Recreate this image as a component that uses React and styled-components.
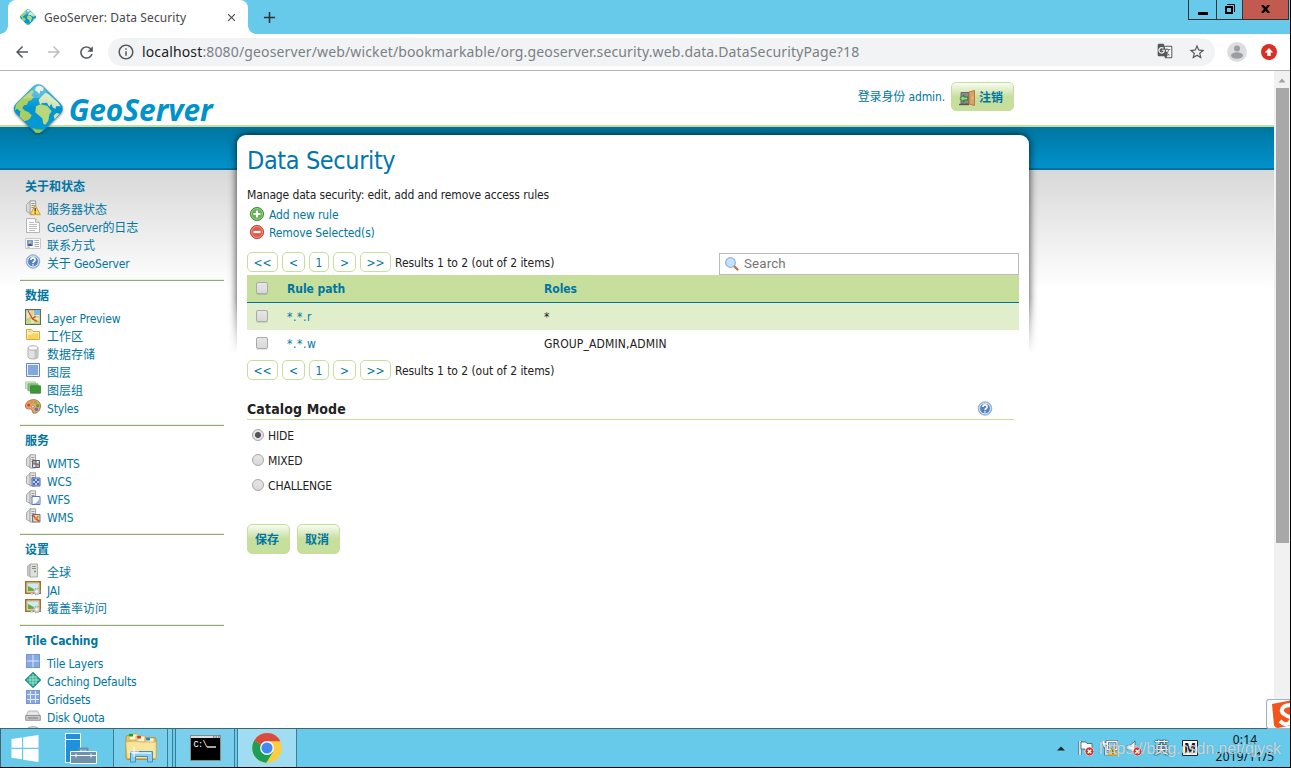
import React from 'react';
import styled, { createGlobalStyle, css } from 'styled-components';
import { MdArrowBack, MdArrowForward, MdRefresh, MdInfoOutline, MdStarBorder, MdClose, MdAdd, MdGTranslate } from 'react-icons/md';

const GlobalStyle = createGlobalStyle`
    * { box-sizing: border-box; }
    body {
        margin: 0;
        overflow: hidden;
        color: #222;
        font: 12px/18px "DejaVu Sans Condensed", "Noto Sans CJK SC", sans-serif;
        letter-spacing: -0.13px;
    }
    svg { display: block; flex: none; }
`

/* ---------- browser window ---------- */

const Desktop = styled.div`
    display: flex;
    flex-direction: column;
    width: 1291px;
    height: 768px;
    overflow: hidden;
    background: #fff;
    border-right: 1px solid #000;
    border-bottom: 1px solid #000;
    position: relative;
`
const TabStrip = styled.div`
    display: flex;
    height: 34px;
    flex: none;
    padding-left: 8px;
    background: #67caeb;
`
const Tab = styled.div`
    position: relative;
    display: flex;
    align-items: center;
    width: 240px;
    padding: 0 10px 0 12px;
    background: #fff;
    border-radius: 8px 8px 0 0;
    color: #45494d;
    font: 12px/34px "Noto Sans", sans-serif;
    letter-spacing: 0.09px;
    &::before, &::after {
        content: '';
        position: absolute;
        bottom: 0;
        width: 8px;
        height: 8px;
    }
    &::before {
        left: -8px;
        background: radial-gradient(circle at 0 0, #67caeb 7.5px, #fff 8px);
    }
    &::after {
        right: -8px;
        background: radial-gradient(circle at 100% 0, #67caeb 7.5px, #fff 8px);
    }
`
const TabTitle = styled.span`
    flex: 1;
    padding: 1px 0 0 8px;
`
const NewTab = styled.div`
    display: flex;
    align-items: center;
    padding-left: 12px;
    color: #333;
`
const WindowButtons = styled.div`
    display: flex;
    margin-left: auto;
    margin-right: 1px;
    height: 20px;
    border: 1px solid #333;
    border-top: none;
`
const WindowButton = styled.div`
    display: flex;
    justify-content: center;
    align-items: center;
    width: ${(p) => p.width}px;
    padding-bottom: 2px;
    background: ${(p) => (p.close ? '#c35a50' : 'transparent')};
    & + & { border-left: 1px solid #333; }
`
const Toolbar = styled.div`
    display: flex;
    align-items: center;
    height: 37px;
    flex: none;
    padding: 0 13px;
    border-bottom: 1px solid #b5b3b5;
    color: #55595d;
`
const NavIcons = styled.div`
    display: flex;
    gap: 14px;
    width: 95px;
    & > :nth-child(2) { color: #bcbec0; }
`
const Omnibox = styled.div`
    display: flex;
    align-items: center;
    width: 1107px;
    height: 28px;
    padding: 0 9px;
    border-radius: 14px;
    background: #f1f3f4;
`
const Url = styled.span`
    flex: 1;
    padding-left: 7px;
    color: #7b8085;
    font: 14px/28px "Noto Sans", sans-serif;
    letter-spacing: 0.14px;
    b { font-weight: 400; color: #202124; }
`
const OmniIcons = styled.div`
    display: flex;
    gap: 15px;
`
const Avatar = styled.svg`
    margin-left: 12px;
`
const Update = styled.svg`
    margin-left: 14px;
`
const Viewport = styled.div`
    display: flex;
    flex: 1;
    min-height: 0;
`
const Scrollbar = styled.div`
    display: flex;
    flex-direction: column;
    align-items: center;
    width: 16px;
    background: #f1f1f1;
`
const ScrollThumb = styled.div`
    width: 13px;
    height: 455px;
    background: #a8a8a8;
`

/* ---------- GeoServer page ---------- */

const Web = styled.div`
    width: 1274px;
    overflow: hidden;
    background: linear-gradient(
        #fff 54px, #c6df9c 54px, #c6df9c 56px, #0076a1 56px, #0092cb 97px,
        #00709a 97px, #00709a 99px, #d8d8d8 99px, #fff 218px
    );
    color: #222;
`
const Header = styled.div`
    display: flex;
    align-items: flex-start;
    height: 64px;
    padding: 5px 260px 0 5px;
`
const Login = styled.div`
    display: flex;
    align-items: center;
    gap: 6px;
    margin: 6px 0 0 auto;
    color: #0076a1;
`
const GreenButton = styled.button`
    display: flex;
    align-items: center;
    gap: 4px;
    width: ${(p) => p.width}px;
    height: ${(p) => p.height}px;
    padding: 2px 0 0 7px;
    border: 1px solid #c6df9c;
    border-radius: 5px;
    background: linear-gradient(#f8fbf2, #c6df9c 14px);
    color: #0076a1;
    font: bold 12px/18px "DejaVu Sans Condensed", "Noto Sans CJK SC", sans-serif;
    letter-spacing: 0;
`
const Body = styled.div`
    display: flex;
    gap: 13px;
`
const Sidebar = styled.div`
    width: 204px;
    margin: 37px 0 0 20px;
`
const NavBlock = styled.div`
    padding: 0 0 8px 5px;
    border-bottom: 1px solid #96a482;
    box-shadow: inset 0 -1px #e9f3d9;
`
const NavHeading = styled.div`
    height: 28px;
    color: #0076a1;
    font-weight: bold;
    line-height: 31px;
    letter-spacing: ${(p) => (p.cjk ? 0 : '-0.1px')};
`
const NavItem = styled.div`
    display: flex;
    height: 18px;
    gap: 6px;
    color: #0076a1;
    line-height: 21px;
    letter-spacing: ${(p) => (p.cjk ? 0 : '-0.17px')};
`
const Card = styled.div`
    position: relative;
    width: 792px;
    height: 600px;
    padding: 0 10px;
    border-radius: 9px 9px 0 0;
    background: #fff;
`
const ShadowFade = styled.div`
    position: absolute;
    z-index: -1;
    left: -12px;
    right: -12px;
    top: -12px;
    height: 232px;
    padding: 12px;
    overflow: hidden;
    mask-image: linear-gradient(#000 175px, transparent 231px);
    &::before {
        content: '';
        display: block;
        height: 300px;
        border-radius: 9px;
        box-shadow: 0 0 9px rgba(0, 0, 0, 0.8);
    }
`
const CardWrap = styled.div`
    position: relative;
    z-index: 0;
`
const Title = styled.h1`
    margin: 0;
    height: 50px;
    color: #0076b0;
    font-size: 25px;
    font-weight: 400;
    line-height: 52px;
    letter-spacing: -0.38px;
`
const Description = styled.p`
    margin: 0;
    line-height: 20px;
`
const Action = styled.div`
    display: flex;
    gap: 4px;
    height: 18px;
    padding-left: 2px;
    color: #0076a1;
    line-height: 20px;
    svg { margin-top: 1px; }
`
const TableTop = styled.div`
    display: flex;
    justify-content: space-between;
    height: 23px;
    margin-top: 11px;
`
const PagerRow = styled.div`
    display: flex;
    gap: 4px;
    height: 20px;
    line-height: 22px;
    letter-spacing: -0.05px;
`
const PageLink = styled.a`
    width: ${(p) => p.width}px;
    height: 20px;
    border: 1px solid #c6df9c;
    border-radius: 5px;
    color: #0076a1;
    line-height: 20px;
    text-align: center;
    letter-spacing: 0;
`
const Search = styled.div`
    display: flex;
    align-items: center;
    gap: 4px;
    align-self: flex-end;
    width: 300px;
    height: 22px;
    padding-left: 4px;
    border: 1px solid #bbb;
    color: #757575;
    font: 13.33px/20px Roboto, sans-serif;
    letter-spacing: 0.15px;
`
const Row = styled.div`
    display: grid;
    grid-template-columns: 40px 257px 1fr;
    align-items: center;
    height: ${(p) => (p.head ? 28 : 27)}px;
    padding-top: 2px;
    line-height: 25px;
    background: ${(p) => (p.even ? '#e0eecb' : 'transparent')};
    ${(p) => p.head && css`
        background: #c6df9c;
        border-bottom: 1px solid #00749f;
        color: #0076a1;
        font-weight: bold;
        letter-spacing: -0.05px;
    `}
`
const RuleLink = styled.span`
    color: #0076a1;
    letter-spacing: 0.6px;
`
const Roles = styled.span`
    letter-spacing: 0.15px;
`
const Checkbox = styled.span`
    width: 12px;
    height: 12px;
    margin: 0 0 3px 9px;
    border: 1px solid #a9a9a9;
    border-radius: 2px;
    background: linear-gradient(#e6e6e6, #d8d8d8);
    box-shadow: 0 1px rgba(0, 0, 0, 0.1);
`
const BottomPager = styled.div`
    margin-top: 3px;
`
const ModeHeading = styled.h2`
    display: flex;
    justify-content: space-between;
    align-items: center;
    width: 767px;
    height: 21px;
    margin: 19px 0 3px;
    padding: 0 21px 0 0;
    border-bottom: 1px solid #c6df9c;
    font-size: 14px;
    line-height: 20px;
    letter-spacing: 0.13px;
    svg { margin-bottom: 1px; }
`
const RadioRow = styled.label`
    display: flex;
    align-items: center;
    gap: 4px;
    height: 25px;
    padding-left: 5px;
`
const Radio = styled.span`
    width: 12px;
    height: 12px;
    margin-bottom: 2px;
    border: 1px solid #a6a6a6;
    border-radius: 50%;
    background: ${(p) => (p.checked
        ? 'radial-gradient(circle, #555 2.6px, #e3e3e3 3.4px)'
        : 'linear-gradient(#e6e6e6, #d9d9d9)')};
`
const Buttons = styled.div`
    display: flex;
    gap: 7px;
    margin-top: 26px;
`

/* ---------- taskbar ---------- */

const Taskbar = styled.div`
    display: flex;
    height: 39px;
    flex: none;
    border-top: 1px solid #47626d;
    border-left: 1px solid #47626d;
    background: #67caeb;
`
const TaskItem = styled.div`
    display: flex;
    justify-content: center;
    align-items: center;
    width: ${(p) => p.width}px;
    border: solid #3a7f98;
    border-width: ${(p) => (p.open ? '0 1px' : '0')};
    background: ${(p) => (p.active ? '#a1ddf2' : p.open ? '#79cfec' : 'transparent')};
`
const StackEdge = styled.div`
    width: 5px;
    margin-right: 2px;
    border-right: 1px solid #3a7f98;
    background: #79cfec;
`
const Tray = styled.div`
    display: flex;
    align-items: center;
    gap: 8px;
    margin-left: auto;
    color: #fff;
`
const Caret = styled.svg`
    margin-right: 5px;
`
const Clock = styled.div`
    width: 82px;
    margin-left: 2px;
    padding-right: 8px;
    color: #111;
    font: 12px/17px "Noto Sans", sans-serif;
    letter-spacing: 0.2px;
    text-align: center;
`
const Ime = styled.span`
    margin: 0 5px 0 4px;
    font-size: 15px;
    text-shadow: 0 0 1px #123, 0 0 2px #123, 0 0 1px #123;
    letter-spacing: 0;
`
const Watermark = styled.div`
    position: absolute;
    right: 9px;
    bottom: 7px;
    color: rgba(255, 255, 255, 0.65);
    text-shadow: 0 0 1px rgba(90, 110, 120, 0.7);
    font: 16px/22px "Liberation Sans", sans-serif;
    letter-spacing: -0.08px;
`
const Sogou = styled.div`
    position: absolute;
    right: -1px;
    top: 699px;
    width: 25px;
    height: 30px;
    overflow: hidden;
    border: 1px solid #9fb4c4;
    border-right: none;
    border-radius: 3px 0 0 3px;
    background: #fbfcfd;
`

/* ---------- icons ---------- */

const Globe = () => (
    <g>
        <rect x="-58" y="-58" width="116" height="116" rx="21" transform="translate(100 98) rotate(45)" fill="url(#sea)" />
        <path d="M62 57 L82 42 L86 48 L79 58 L86 63 L80 72 L70 76 L66 86 L57 88 L52 96 L60 104 L70 108 L80 118 L76 127 L68 133 L58 136 L44 122 L46 106 L36 98 L29 104 L33 86 L46 72Z" fill="#a9cf62" />
        <path d="M93 34 Q104 24 116 36 L114 45 L106 44 L103 55 L97 47 L90 43Z" fill="#e9f3d6" />
        <path d="M101 71 L111 60 L122 50 L133 56 L160 80 L166 90 L153 91 L151 99 L143 94 L139 83 L133 92 L126 80 L111 81 L105 86Z" fill="#d3e6b3" />
        <path d="M93 91 L107 85 L127 90 L140 106 L133 116 L130 134 L121 146 L115 143 L112 127 L100 117 L91 109Z" fill="#b9d87c" />
        <path d="M146 119 L154 111 L164 113 L149 130Z" fill="#cfe3a2" />
        <path d="M82 156 L95 160 L115 161 L103 171 L91 170Z" fill="#97c83d" />
        <path d="M100 28 Q107 28 112 34 L163 86 Q170 93 169 97 C145 70 100 60 53 70 L88 34 Q94 28 100 28Z" fill="#fff" opacity=".22" />
    </g>
)

const Logo = () => (
    <svg width="212" height="60" viewBox="0 0 636 180">
        <defs>
            <linearGradient id="sea" x1="0" y1="0" x2="1" y2="1">
                <stop offset="0" stopColor="#4db8e0" />
                <stop offset=".5" stopColor="#0094d0" />
                <stop offset="1" stopColor="#0a9bd6" />
            </linearGradient>
            <filter id="soft" x="-20%" y="-20%" width="140%" height="140%"><feGaussianBlur stdDeviation="4" /></filter>
        </defs>
        <rect x="-57" y="-57" width="114" height="114" rx="21" transform="translate(100 101) rotate(45)" fill="#222" opacity=".7" filter="url(#soft)" />
        <Globe />
        <text x="191" y="134" textLength="432" lengthAdjust="spacingAndGlyphs" fill="#0092cb" fontFamily="Noto Sans, sans-serif" fontSize="91" fontWeight="700" fontStyle="italic">GeoServer</text>
    </svg>
)

const Favicon = () => (
    <svg width="16" height="16" viewBox="26 24 148 148"><Globe /></svg>
)

const Svg16 = ({ children, ...rest }) => <svg width="16" height="16" viewBox="0 0 16 16" {...rest}>{children}</svg>

const Server = ({ children }) => (
    <Svg16>
        <path d="M1.5 4.5 5.5 1v12.5l-4-2z" fill="#ddd" stroke="#999" strokeWidth=".8" />
        <path d="M5 .8h5.6V14H5z" fill="#e6e6e6" stroke="#999" strokeWidth=".9" />
        <path d="M6.5 3.5h3M6.5 5.5h3M6.5 7.5h3" stroke="#999" />
        {children}
    </Svg16>
)

const QuestionBall = () => (
    <Svg16>
        <circle cx="8" cy="7.5" r="6.8" fill="#9db9de" stroke="#7d9dca" strokeWidth=".7" />
        <circle cx="8" cy="7.5" r="5.4" fill="#5482bf" stroke="#e4edf8" strokeWidth="1" />
        <path d="M5.9 6q0-2.1 2.1-2.1T10.1 6q0 1-1 1.5T8 9.1M8 10.2v1.4" fill="none" stroke="#fff" strokeWidth="1.6" />
    </Svg16>
)

const Picture = () => (
    <Svg16>
        <path d="M.8.8h14.4v11.4H.8z" fill="#cdeaf8" stroke="#a66f25" strokeWidth="1.6" />
        <path d="M2.3 2.3h11.4v8.4H2.3z" fill="none" stroke="#e5bf6a" strokeWidth=".8" />
        <path d="M3 10V5l4 2 5 3z" fill="#5fae3e" />
        <circle cx="11.7" cy="10.5" r="3" fill="#ddd" stroke="#aaa" strokeWidth="1.6" strokeDasharray="1.5 .9" />
        <circle cx="11.7" cy="10.5" r="1" fill="#fff" />
        <circle cx="6.7" cy="13.3" r="1.3" fill="#ddd" />
    </Svg16>
)

const icons = {
    status: (
        <Server>
            <path d="m10.2 5.4 5.2 9.3H5z" fill="#fbd560" stroke="#c98d1c" strokeWidth=".8" strokeLinejoin="round" />
            <path d="M10.2 8v3.6M10.2 12.4v1.3" stroke="#5b4310" strokeWidth="1.3" />
        </Server>
    ),
    log: (
        <Svg16>
            <path d="M1.5.5h9l4 4v10h-13z" fill="#fafafa" stroke="#b5b5b5" />
            <path d="M10.5.5v4h4" fill="#e3e3e3" stroke="#b5b5b5" />
            <path d="M4 4.5h5M4 6.5h8M4 8.5h8M4 10.5h8M4 12.5h6" stroke="#b9b9b9" strokeWidth=".9" />
        </Svg16>
    ),
    contact: (
        <Svg16>
            <path d="M.5 2.5h15v10H.5z" fill="#f7f7f7" stroke="#c8c8c8" />
            <path d="M2 4h6v6H2z" fill="#6d9fdc" />
            <circle cx="5" cy="6.3" r="1.4" fill="#e8b27c" />
            <path d="M3 10q0-2.2 2-2.2T7 10z" fill="#36578c" />
            <path d="M9.5 4.5H14M9.5 6.5H14M9.5 8.5H14M2 11.2h3M9.5 10.5H14" stroke="#9a9a9a" strokeWidth=".8" />
        </Svg16>
    ),
    about: <QuestionBall />,
    preview: (
        <Svg16>
            <path d="M.5.5h15v15H.5z" fill="#e0eab5" stroke="#586e58" strokeWidth="1.3" />
            <path d="M9 1h6v5H9z" fill="#86b4e4" />
            <path d="M1 9h5v6H1zM9 12h6v3H9z" fill="#bcdc8b" />
            <path d="M1.5 11.5 6 8l8.5 5M10 8h5M7 1.5V7" fill="none" stroke="#f0b44c" />
            <path d="m3 1.5 4.5 8.5L12 12.5M7.5 10l3-3" fill="none" stroke="#d0432c" strokeWidth="1.2" />
        </Svg16>
    ),
    folder: (
        <Svg16>
            <path d="M1.5 12.5v-10h5l1.500 2h6.500v8z" fill="#fdf2c4" stroke="#dea63c" />
            <path d="M2.7 12V7.5h4l1.300-1.300h5.500V12z" fill="#f9d35e" />
            <path d="M3.5 4.3h3" stroke="#e8b348" />
        </Svg16>
    ),
    store: (
        <Svg16>
            <path d="M3 3v9q0 2 5 2t5-2V3z" fill="#e2e2e2" stroke="#b1b1b1" />
            <path d="M9.500 5h3v7.500q-1 1-3 1z" fill="#c3c3c3" />
            <ellipse cx="8" cy="3" rx="5" ry="2.200" fill="#fafafa" stroke="#b1b1b1" />
        </Svg16>
    ),
    layer: (
        <Svg16>
            <path d="M1.5.5h13v13h-13z" fill="#e9f0fb" stroke="#6f87b8" />
            <path d="M3 2h10v10H3z" fill="#83a6df" />
        </Svg16>
    ),
    group: (
        <Svg16>
            <path d="M.5.8h10v7H.5z" fill="#cde6c8" stroke="#a9cba4" strokeWidth=".8" />
            <path d="M3 2.8h10v7H3z" fill="#86c37c" stroke="#6da765" strokeWidth=".8" />
            <path d="M5.5 4.8h10v7.4h-10z" fill="#3f9638" stroke="#3c7f37" strokeWidth=".8" />
        </Svg16>
    ),
    styles: (
        <Svg16>
            <path d="M8.500.700c4 0 7 2.600 7 6.200 0 4.300-3.200 7.400-6.200 7.400-2.400 0-1.300-2.800-3-4-1.400-1-5.800.800-5.800-3.200C.500 3.200 4.400.700 8.500.700z" fill="#e2a671" stroke="#aa6431" strokeWidth=".9" />
            <circle cx="3.7" cy="6" r="1.6" fill="#e3402e" />
            <circle cx="6.6" cy="3.3" r="1.5" fill="#e98e28" />
            <circle cx="10.6" cy="3.4" r="1.5" fill="#79b948" />
            <circle cx="12.7" cy="6.7" r="1.6" fill="#4da63d" />
            <circle cx="11.3" cy="10.3" r="1.7" fill="#447bc8" />
            <circle cx="7.8" cy="7.6" r="1.2" fill="#fff" stroke="#aa6431" strokeWidth=".6" />
        </Svg16>
    ),
    wmts: (
        <Server>
            <path d="M7.5 6.5h7v7h-7z" fill="#f3e6ae" stroke="#4963a8" />
            <path d="M8 7h3v3H8zM11 10h3v3h-3z" fill="#e99c48" />
            <path d="M11 7v6M8 10h6" stroke="#4963a8" />
        </Server>
    ),
    wcs: (
        <Server>
            <path d="M7 6h8v8H7z" fill="#b6caf0" stroke="#4963a8" />
            <path d="M8 7h2v2H8zM12 7h2v2h-2zM10 9h2v2h-2zM8 11h2v2H8zM12 11h2v2h-2z" fill="#4b6dc0" />
        </Server>
    ),
    wfs: (
        <Server>
            <path d="M7 6.5h8v8H7z" fill="#fff" stroke="#5b78b6" />
            <path d="M8 14q5-1 6.5-6v6z" fill="#94b3e6" />
        </Server>
    ),
    wms: (
        <Server>
            <path d="M7.5 6.5H15V14H7.5z" fill="#e6df8f" stroke="#5c74ac" />
            <path d="m8 7 3 4 3.5 2.5M11 11l2.500-3" stroke="#df4b2b" strokeWidth="1.6" fill="none" />
            <path d="M8 12.500 14 8" stroke="#eeb23c" />
        </Server>
    ),
    global: (
        <Svg16>
            <path d="M2.5 3 6 1v13l-3.5-1.5z" fill="#c9c9c9" stroke="#aaa" strokeWidth=".8" />
            <path d="M5 1h7.5v13H5z" fill="#e0e0e0" stroke="#a3a3a3" strokeWidth=".9" />
            <path d="M7 3.5h4M7 5.5h4" stroke="#8a8a8a" />
            <path d="M9 8.5h2" stroke="#4daf3c" strokeWidth="1.5" />
        </Svg16>
    ),
    picture: <Picture />,
    tiles: (
        <Svg16>
            <path d="M1 0h14v14H1z" fill="#87a9e2" />
            <path d="M8 0v14M1 7h14" stroke="#dce7f9" />
            <path d="M1.5.5h13v13h-13z" fill="none" stroke="#7391cd" strokeWidth=".8" />
        </Svg16>
    ),
    caching: (
        <Svg16>
            <path d="m8 .6 7.4 7.4L8 15.4.6 8z" fill="#2fb092" stroke="#168a86" strokeWidth="1.200" strokeLinejoin="round" />
            <path d="M5 4.5v7M8 2v12M11 4.5v7M4.500 5h7M2 8h12M4.500 11h7" stroke="#c8f0dc" strokeWidth=".7" />
        </Svg16>
    ),
    grid: (
        <Svg16>
            <path d="M1 0h14v14H1z" fill="#87a9e2" />
            <path d="M5.5 0v14M10.5 0v14M1 4.5h14M1 9.5h14" stroke="#dce7f9" />
            <path d="M1.5.5h13v13h-13z" fill="none" stroke="#7391cd" strokeWidth=".8" />
        </Svg16>
    ),
    disk: (
        <Svg16>
            <path d="M3.5 3h9L15 8H1z" fill="#e6e6e6" stroke="#a8a8a8" strokeWidth=".8" />
            <path d="M.7 7.5h14.6v4.800H.7z" fill="#c9c9c9" stroke="#8e8e8e" strokeWidth=".9" />
            <path d="M3 10h10" stroke="#777" />
        </Svg16>
    ),
    blob: (
        <Svg16>
            <path d="M2.5 3v10h11V3z" fill="#dedede" stroke="#b1b1b1" />
            <ellipse cx="8" cy="3" rx="5.5" ry="2.2" fill="#eee" stroke="#999" />
        </Svg16>
    ),
}

const DoorIcon = () => (
    <Svg16>
        <path d="M2 2.5h8v11.5H2z" fill="#8a8a8a" stroke="#666" />
        <path d="M0 14.5h10" stroke="#555" strokeWidth="1.4" />
        <path d="m10 2 5.5-1.5v15L10 14z" fill="#dda067" stroke="#b06a33" strokeWidth=".8" />
        <path d="m.8 8.500 4-3.500v2h4v3h-4v2z" fill="#8fdc80" stroke="#25733a" strokeWidth=".9" />
        <circle cx="13.5" cy="8" r=".8" fill="#ffe26a" />
    </Svg16>
)

const Ball = ({ color, edge, minus }) => (
    <Svg16>
        <circle cx="8" cy="8" r="6.6" fill={color} stroke={edge} strokeWidth=".9" />
        <circle cx="8" cy="8" r="5.5" fill="none" stroke="#fff" strokeOpacity=".45" strokeWidth=".8" />
        <path d={minus ? 'M4.500 8h7' : 'M4.500 8h7M8 4.500v7'} stroke="#fff" strokeWidth="2.2" />
    </Svg16>
)

const Magnifier = () => (
    <Svg16>
        <path d="m10 10 3.5 3.5" stroke="#b9763a" strokeWidth="2.4" strokeLinecap="round" />
        <circle cx="6.5" cy="6.5" r="4.8" fill="#c5e1fb" stroke="#92b3e3" strokeWidth="1.3" />
    </Svg16>
)

const WindowsIcon = () => (
    <svg width="28" height="27" viewBox="0 0 28 27">
        <path d="M.5 4 11 2.5V12.7H.5zM12.2 2.3 27.5 0v12.700H12.200zM.5 14H11v10.300L.5 22.800zM12.200 14h15.300v13l-15.300-2.300z" fill="#fff" />
    </svg>
)

const ServerManagerIcon = () => (
    <svg width="32" height="31" viewBox="0 0 32 31">
        <path d="M.5.5h15v29H.5z" fill="#1e90dc" stroke="#fff" />
        <path d="M1 6.500h14" stroke="#fff" />
        <path d="M14.500 18v-2.500h8V18" fill="none" stroke="#6f8ba3" strokeWidth="2" />
        <path d="M5.500 18.500h26v12h-26z" fill="#7190aa" stroke="#fff" />
        <path d="M6 22.500h25M11 20.500v4M26 20.500v4" stroke="#fff" />
    </svg>
)

const ExplorerIcon = () => (
    <svg width="32" height="30" viewBox="0 0 32 30">
        <path d="M1 4q0-1.500 2-1.500h10l2 2h14q2 0 2 2v18q0 2-2 2H3q-2 0-2-2z" fill="#ebc866" stroke="#b48f3a" />
        <path d="M4 1h9v6H4zM11 3h9v6h-9zM20 5h9v5h-9z" fill="#fff5d0" stroke="#c9a24a" strokeWidth=".7" />
        <path d="M4 1h4v2.500H4z" fill="#12a81c" />
        <path d="M12 3h4v2.500h-4z" fill="#df3b24" />
        <path d="M21 5h4v2.500h-4z" fill="#2a89df" />
        <path d="M.8 9q8-2 15.200 0h15.200v16.500H2z" fill="#f9e49c" stroke="#d2ac50" strokeWidth=".8" />
        <path d="M5.500 29V18.500h22V29h-5v-5.500h-12V29z" fill="#8ccdf2" stroke="#3d8fc4" />
        <path d="M7 20h19" stroke="#d9f2ff" strokeWidth="1.500" />
        <path d="M9 14v10M4 19h10" stroke="#fff" />
    </svg>
)

const ConsoleIcon = () => (
    <svg width="31" height="26" viewBox="0 0 31 26">
        <path d="M.5.5h30v25H.5z" fill="#000" stroke="#888" />
        <path d="M1 1h29v2H1z" fill="#ddd" />
        <path d="M23 2h1.500M25.500 2H27M28 2h1.500" stroke="#345" />
        <text x="3.5" y="12" fill="#fff" fontFamily="Liberation Mono, monospace" fontSize="8.5" textLength="14">C:\</text>
        <path d="M17 12h9" stroke="#fff" strokeWidth="1.3" />
    </svg>
)

const ChromeIcon = () => (
    <svg width="30" height="30" viewBox="0 0 30 30">
        <circle cx="15" cy="15" r="14.8" fill="#fdcd41" />
        <path d="M15 15 2.2 7.6A14.8 14.8 0 0 0 14.3 29.8L21.3 18.5z" fill="#1c9e57" />
        <path d="M15 15 2.2 7.6A14.8 14.8 0 0 1 28.4 8.3H15z" fill="#dc4a3d" />
        <circle cx="15" cy="15" r="6.9" fill="#fff" />
        <circle cx="15" cy="15" r="5.6" fill="#4688f2" />
    </svg>
)

const ErrorBadge = () => (
    <g>
        <circle cx="11.5" cy="11.5" r="4.4" fill="#db2b20" stroke="#fff" strokeWidth=".6" />
        <path d="m9.7 9.7 3.600 3.600M13.300 9.700l-3.600 3.600" stroke="#fff" strokeWidth="1.4" />
    </g>
)

const FlagIcon = () => (
    <Svg16>
        <path d="M2 1v14" stroke="#456" strokeWidth="3" />
        <path d="M2 1v14" stroke="#fff" strokeWidth="1.6" />
        <path d="M3 2h5l1 1.5h5v7H8L7 9H3z" fill="#fff" stroke="#456" strokeWidth=".8" />
        <ErrorBadge />
    </Svg16>
)

const NetworkIcon = () => (
    <Svg16>
        <path d="M5.500 1.500h9.500v8H5.500zM2 1v4q0 2 1.500 2V14H9M1 1v3h4V1" fill="#76ccee" stroke="#456" strokeWidth="2.600" />
        <path d="M5.500 1.500h9.500v8H5.500zM2 1v4q0 2 1.500 2V14H9M1 1v3h4V1" fill="none" stroke="#fff" strokeWidth="1.300" />
        <path d="m11 6.500 4.800 8.700H6.200z" fill="#f8c62c" stroke="#c4891a" strokeWidth=".7" />
        <path d="M11 9.500V12M11 13v1.200" stroke="#333" strokeWidth="1.200" />
    </Svg16>
)

const SpeakerIcon = () => (
    <Svg16>
        <path d="M1 5.500h3L9 1v13L4 9.500H1z" fill="#fff" stroke="#456" strokeWidth=".8" />
        <ErrorBadge />
    </Svg16>
)

const ImeModeIcon = () => (
    <Svg16>
        <path d="M.5.5h15v15H.5z" fill="#fff" stroke="#222" />
        <text x="8" y="13" textAnchor="middle" fill="#111" fontFamily="Liberation Sans, sans-serif" fontSize="14" fontWeight="700">M</text>
    </Svg16>
)

/* ---------- data ---------- */

const menu = [
    { heading: '关于和状态', items: [['status', '服务器状态'], ['log', 'GeoServer的日志'], ['contact', '联系方式'], ['about', '关于 GeoServer']] },
    { heading: '数据', items: [['preview', 'Layer Preview'], ['folder', '工作区'], ['store', '数据存储'], ['layer', '图层'], ['group', '图层组'], ['styles', 'Styles']] },
    { heading: '服务', items: [['wmts', 'WMTS'], ['wcs', 'WCS'], ['wfs', 'WFS'], ['wms', 'WMS']] },
    { heading: '设置', items: [['global', '全球'], ['picture', 'JAI'], ['picture', '覆盖率访问']] },
    { heading: 'Tile Caching', items: [['tiles', 'Tile Layers'], ['caching', 'Caching Defaults'], ['grid', 'Gridsets'], ['disk', 'Disk Quota'], ['blob', '']] },
]
const rules = [
    { path: '*.*.r', roles: '*' },
    { path: '*.*.w', roles: 'GROUP_ADMIN,ADMIN' },
]
const modes = ['HIDE', 'MIXED', 'CHALLENGE']
const pages = [['<<', 31], ['<', 23], ['1', 20], ['>', 23], ['>>', 31]]

const isCjk = (text) => /^[\u4e00-\u9fff]+$/.test(text)

function Pager() {
    return (
        <PagerRow>
            {pages.map(([label, width]) => <PageLink key={label} width={width}>{label}</PageLink>)}
            <span>Results 1 to 2 (out of 2 items)</span>
        </PagerRow>
    );
}

function SideMenu() {
    return (
        <Sidebar>
            {menu.map((block) => (
                <NavBlock key={block.heading}>
                    <NavHeading cjk={isCjk(block.heading)}>{block.heading}</NavHeading>
                    {block.items.map(([icon, label]) => (
                        <NavItem key={label} cjk={isCjk(label)}>{icons[icon]}{label}</NavItem>
                    ))}
                </NavBlock>
            ))}
        </Sidebar>
    );
}

function DataSecurity() {
    return (
        <CardWrap>
            <ShadowFade />
            <Card>
                <Title>Data Security</Title>
                <Description>Manage data security: edit, add and remove access rules</Description>
                <Action><Ball color="#5fb04d" edge="#3c8a36" />Add new rule</Action>
                <Action><Ball color="#e2594b" edge="#b53a31" minus />Remove Selected(s)</Action>
                <TableTop>
                    <Pager />
                    <Search><Magnifier />Search</Search>
                </TableTop>
                <Row head>
                    <Checkbox />
                    <span>Rule path</span>
                    <span>Roles</span>
                </Row>
                {rules.map((rule, index) => (
                    <Row key={rule.path} even={index % 2 === 0}>
                        <Checkbox />
                        <RuleLink>{rule.path}</RuleLink>
                        <Roles>{rule.roles}</Roles>
                    </Row>
                ))}
                <BottomPager><Pager /></BottomPager>
                <ModeHeading>Catalog Mode<QuestionBall /></ModeHeading>
                {modes.map((mode) => (
                    <RadioRow key={mode}><Radio checked={mode === 'HIDE'} />{mode}</RadioRow>
                ))}
                <Buttons>
                    <GreenButton width={43} height={30}>保存</GreenButton>
                    <GreenButton width={43} height={30}>取消</GreenButton>
                </Buttons>
            </Card>
        </CardWrap>
    );
}

function Chrome() {
    return (
        <>
            <TabStrip>
                <Tab>
                    <Favicon />
                    <TabTitle>GeoServer: Data Security</TabTitle>
                    <MdClose size={13} />
                </Tab>
                <NewTab><MdAdd size={19} /></NewTab>
                <WindowButtons>
                    <WindowButton width={27}>
                        <svg width="10" height="14"><path d="M0 11.5h10" stroke="#000" strokeWidth="3" /></svg>
                    </WindowButton>
                    <WindowButton width={26}>
                        <svg width="10" height="10" fill="none" stroke="#000"><path d="M1 3h6v6H1z" strokeWidth="2" /><path d="M2 .5h7.500V8" /></svg>
                    </WindowButton>
                    <WindowButton width={46} close>
                        <svg width="9" height="8"><path d="m1 0 7 8M8 0 1 8" stroke="#000" strokeWidth="2.4" /></svg>
                    </WindowButton>
                </WindowButtons>
            </TabStrip>
            <Toolbar>
                <NavIcons>
                    <MdArrowBack size={18} />
                    <MdArrowForward size={18} />
                    <MdRefresh size={19} />
                </NavIcons>
                <Omnibox>
                    <MdInfoOutline size={18} />
                    <Url><b>localhost</b>:8080/geoserver/web/wicket/bookmarkable/org.geoserver.security.web.data.DataSecurityPage?18</Url>
                    <OmniIcons>
                        <MdGTranslate size={16} />
                        <MdStarBorder size={18} />
                    </OmniIcons>
                </Omnibox>
                <Avatar width="20" height="20">
                    <circle cx="10" cy="10" r="10" fill="#dcdde0" />
                    <circle cx="10" cy="6.5" r="3" fill="#9b9da1" />
                    <ellipse cx="10" cy="13.5" rx="6" ry="3.2" fill="#9b9da1" />
                </Avatar>
                <Update width="16" height="16">
                    <circle cx="8" cy="8" r="8" fill="#d93025" />
                    <path d="m8 4 4.200 4.500H9.700V12H6.300V8.500H3.800z" fill="#fff" />
                </Update>
            </Toolbar>
        </>
    );
}

function App() {
    return (
        <Desktop>
            <GlobalStyle />
            <Chrome />
            <Viewport>
                <Web>
                    <Header>
                        <Logo />
                        <Login>
                            登录身份 admin.
                            <GreenButton width={63} height={29}><DoorIcon />注销</GreenButton>
                        </Login>
                    </Header>
                    <Body>
                        <SideMenu />
                        <DataSecurity />
                    </Body>
                </Web>
                <Scrollbar>
                    <svg width="16" height="17"><path d="M4.5 11.5 8 7.5l3.500 4z" fill="#a0a0a0" /></svg>
                    <ScrollThumb />
                </Scrollbar>
            </Viewport>
            <Taskbar>
                <TaskItem width={48}><WindowsIcon /></TaskItem>
                <TaskItem width={64}><ServerManagerIcon /></TaskItem>
                <TaskItem width={55} open><ExplorerIcon /></TaskItem>
                <StackEdge />
                <TaskItem width={60} open><ConsoleIcon /></TaskItem>
                <TaskItem width={2} />
                <TaskItem width={60} open active><ChromeIcon /></TaskItem>
                <Tray>
                    <Caret width="8" height="5"><path d="m0 4.5 4-4 4 4z" fill="#222" /></Caret>
                    <FlagIcon />
                    <NetworkIcon />
                    <SpeakerIcon />
                    <Ime>英</Ime>
                    <ImeModeIcon />
                    <Clock>0:14<br />2019/11/5</Clock>
                </Tray>
            </Taskbar>
            <Sogou>
                <svg width="25" height="29" viewBox="0 0 25 29">
                    <path d="M5 4 31-1l4 24-24 5q-3 0-4-3z" fill="#f2541b" />
                    <path d="M27 6q-8-2-11 1.500T17 14t7 3-1 5-10-1" fill="none" stroke="#fff" strokeWidth="4" />
                </svg>
            </Sogou>
            <Watermark>https://blog.csdn.net/qjysk</Watermark>
        </Desktop>
    );
}

export default App;
